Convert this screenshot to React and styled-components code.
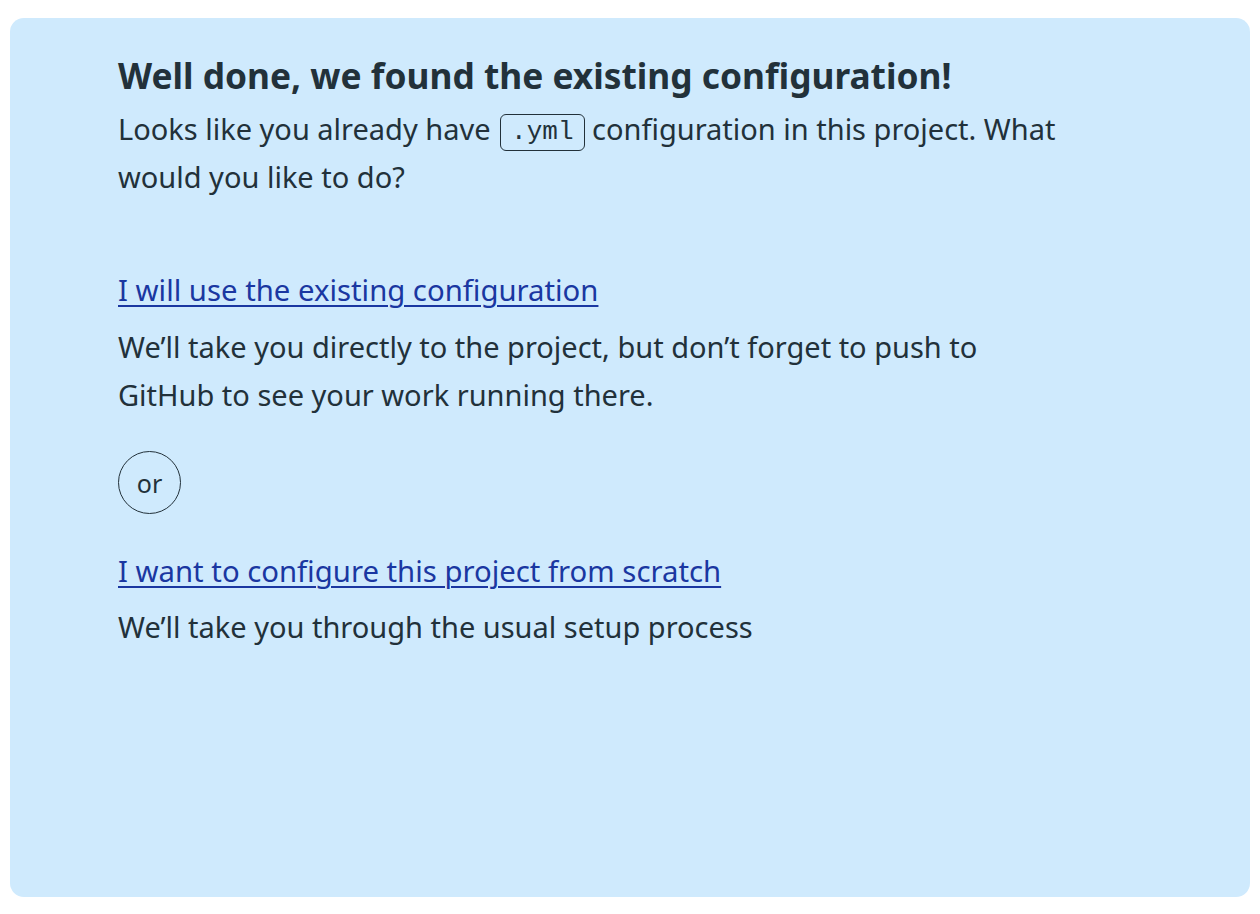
import styled, { createGlobalStyle } from "styled-components";

const Global = createGlobalStyle`
  body {
    margin: 0;
    background: #ffffff;
    font-family: "Noto Sans", "Open Sans", sans-serif;
    color: #22313a;
  }
`;

const Page = styled.div`
  padding: 18px 10px 17px 10px;
`;

const Panel = styled.section`
  background: #cfeafd;
  border-radius: 14px;
  height: 879px;
  box-sizing: border-box;
  padding: 35px 40px 0 108px;
`;

const Title = styled.h1`
  margin: 0;
  font-size: 35.3px;
  line-height: 44px;
  font-weight: 700;
  color: #22313a;
`;

const Text = styled.p`
  margin: ${(p) => p.$top || 0}px 0 0 0;
  max-width: 945px;
  font-size: 29px;
  line-height: 48px;
  color: #22313a;
`;

const Code = styled.code`
  display: inline-block;
  font-family: "Liberation Mono", "DejaVu Sans Mono", monospace;
  font-size: 26px;
  line-height: 35px;
  padding: 0 10px;
  border: 1.5px solid #22313a;
  border-radius: 6px;
  vertical-align: 1px;
  margin-left: 2px;
`;

const Link = styled.a`
  display: inline-block;
  margin-top: ${(p) => p.$top}px;
  font-size: 29.3px;
  line-height: 48px;
  color: #1a37a1;
  text-decoration: underline;
  text-underline-offset: 4px;
  text-decoration-thickness: 2px;
`;

const Or = styled.div`
  margin-top: 32px;
  width: 61px;
  height: 61px;
  border: 1.5px solid #22313a;
  border-radius: 50%;
  display: flex;
  align-items: center;
  justify-content: center;
  font-size: 25px;
  font-weight: 400;
`;

export default function App() {
  return (
    <Page>
      <Global />
      <Panel>
        <Title>Well done, we found the existing configuration!</Title>
        <Text $top={8}>
          Looks like you already have <Code>.yml</Code> configuration in this project. What would you like to do?
        </Text>
        <Link href="#" $top={65}>I will use the existing configuration</Link>
        <Text $top={9}>
          We’ll take you directly to the project, but don’t forget to push to GitHub to see your work running there.
        </Text>
        <Or>or</Or>
        <Link href="#" $top={33}>I want to configure this project from scratch</Link>
        <Text $top={8}>We’ll take you through the usual setup process</Text>
      </Panel>
    </Page>
  );
}
